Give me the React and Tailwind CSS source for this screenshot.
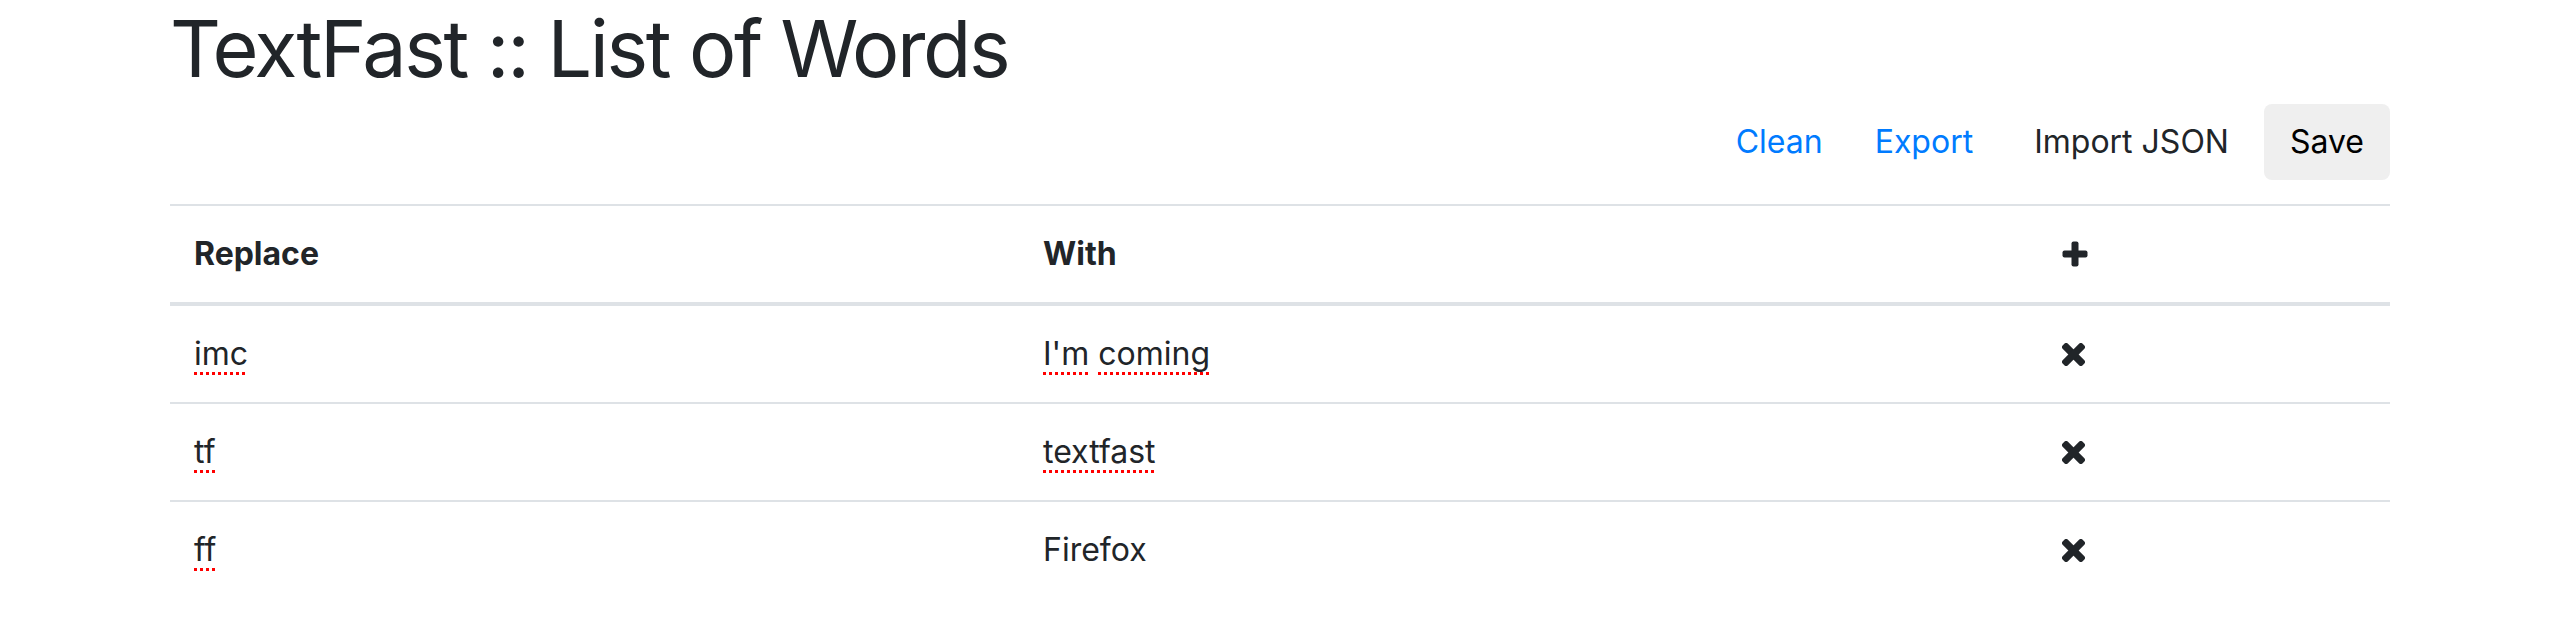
import React from "react";

function Miss({ children }) {
  return (
    <span className="underline decoration-dotted decoration-[#ff0000] decoration-[3px] underline-offset-[7px] [text-decoration-skip-ink:none]">
      {children}
    </span>
  );
}

function PlusIcon() {
  return (
    <svg width="26" height="26" viewBox="0 0 26 26" className="block">
      <rect x="0.5" y="9.5" width="25" height="7" rx="2" fill="#212529" />
      <rect x="9.5" y="0.5" width="7" height="25" rx="2" fill="#212529" />
    </svg>
  );
}

function TimesIcon() {
  return (
    <svg width="23" height="23" viewBox="0 0 23 23" className="block">
      <g transform="translate(11.5 11.5) rotate(45)">
        <rect x="-14" y="-3.6" width="28" height="7.2" rx="2.2" fill="#212529" />
        <rect x="-3.6" y="-14" width="7.2" height="28" rx="2.2" fill="#212529" />
      </g>
    </svg>
  );
}

const rows = [
  { r: <Miss>imc</Miss>, w: <><Miss>I'm</Miss> <Miss>coming</Miss></> },
  { r: <Miss>tf</Miss>, w: <Miss>textfast</Miss> },
  { r: <Miss>ff</Miss>, w: <>Firefox</> },
];

export default function App() {
  return (
    <div className="font-['Inter',sans-serif] text-[#212529] text-[32px] leading-[48px] bg-white min-h-[630px]">
      <div className="w-[2220px] mx-auto">
        <h1 className="text-[79px] leading-[96px] font-normal tracking-[-2.4px] m-0">
          TextFast :: List of Words
        </h1>
        <div className="mt-2 flex justify-end">
          <button className="px-[26px] py-[14px] rounded-[8px] text-[#007bff] leading-[48px]">Clean</button>
          <button className="px-[26px] py-[14px] rounded-[8px] text-[#007bff] leading-[48px]">Export</button>
          <button className="ml-[9px] px-[26px] py-[14px] rounded-[8px] text-[#212529] leading-[48px]">Import JSON</button>
          <button className="ml-[9px] px-[26px] py-[14px] rounded-[8px] bg-[#efefef] text-black leading-[48px]">Save</button>
        </div>
        <div className="mt-6 border-t-2 border-[#dee2e6]">
          <div className="grid grid-cols-[849px_1019px_1fr] border-b-4 border-[#dee2e6] font-bold">
            <div className="p-6">Replace</div>
            <div className="p-6">With</div>
            <div className="p-6 flex items-center">
              <PlusIcon />
            </div>
          </div>
          {rows.map((row, i) => (
            <div
              key={i}
              className={
                "grid grid-cols-[849px_1019px_1fr] " +
                (i > 0 ? "border-t-2 border-[#dee2e6]" : "")
              }
            >
              <div className="p-6">{row.r}</div>
              <div className="p-6">{row.w}</div>
              <div className="p-6 flex items-center">
                <TimesIcon />
              </div>
            </div>
          ))}
        </div>
      </div>
    </div>
  );
}
